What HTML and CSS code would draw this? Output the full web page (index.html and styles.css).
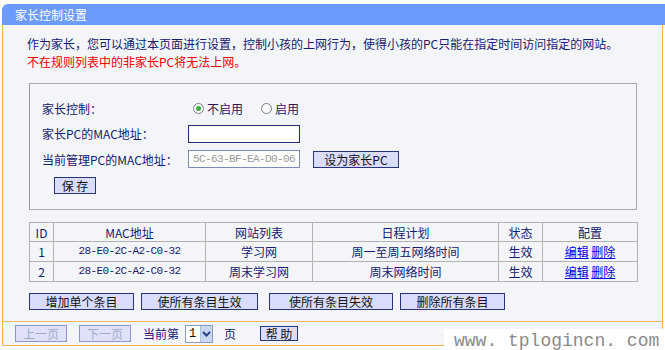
FILE: index.html
```html
<!DOCTYPE html>
<html lang="zh-CN">
<head>
<meta charset="utf-8">
<title>家长控制设置</title>
<link rel="stylesheet" href="styles.css">
</head>
<body>
<div class="wrap">
  <div class="title">家长控制设置</div>
  <div class="panel">
    <p class="intro">作为家长，您可以通过本页面进行设置，控制小孩的上网行为，使得小孩的PC只能在指定时间访问指定的网站。</p>
    <p class="warn">不在规则列表中的非家长PC将无法上网。</p>
    <div class="box">
      <div class="row">
        <span class="label">家长控制：</span>
        <span class="radio on"></span><span class="rtext">不启用</span>
        <span class="radio second"></span><span class="rtext">启用</span>
      </div>
      <div class="row">
        <span class="label">家长PC的MAC地址：</span>
        <span class="field"></span>
      </div>
      <div class="row row3">
        <span class="label">当前管理PC的MAC地址：</span>
        <span class="field disabled">5C-63-BF-EA-D0-06</span>
        <span class="btn setpc">设为家长PC</span>
      </div>
      <div class="saverow"><span class="btn save">保 存</span></div>
    </div>
    <table class="rules">
      <colgroup>
        <col class="c-id"><col class="c-mac"><col class="c-site"><col class="c-plan"><col class="c-state"><col class="c-cfg">
      </colgroup>
      <tr><th>ID</th><th>MAC地址</th><th>网站列表</th><th>日程计划</th><th>状态</th><th>配置</th></tr>
      <tr><td>1</td><td class="mac">28-E0-2C-A2-C0-32</td><td>学习网</td><td>周一至周五网络时间</td><td>生效</td><td><a href="#">编辑</a> <a href="#">删除</a></td></tr>
      <tr><td>2</td><td class="mac">28-E0-2C-A2-C0-32</td><td>周末学习网</td><td>周末网络时间</td><td>生效</td><td><a href="#">编辑</a> <a href="#">删除</a></td></tr>
    </table>
    <div class="actions">
      <span class="btn a1">增加单个条目</span>
      <span class="btn a2">使所有条目生效</span>
      <span class="btn a3">使所有条目失效</span>
      <span class="btn a4">删除所有条目</span>
    </div>
  </div>
  <div class="footer">
    <span class="btn off prev">上一页</span>
    <span class="btn off next">下一页</span>
    <span class="ftext">当前第</span>
    <span class="select"><span class="sval">1</span><span class="sarrow"><svg width="9" height="6" viewBox="0 0 9 6"><path d="M1 1 L4.5 4.5 L8 1" fill="none" stroke="#2a3f8a" stroke-width="2"/></svg></span></span>
    <span class="ftext page">页</span>
    <span class="btn help">帮 助</span>
  </div>
  <div class="watermark">www. tplogincn. com</div>
</div>
</body>
</html>
```
FILE: styles.css
```css
html, body {
  margin: 0;
  padding: 0;
  background: #ffffff;
}
body {
  font-family: "Noto Sans CJK SC", "Noto Sans", sans-serif;
  font-size: 12px;
  color: #14206e;
}
.wrap {
  position: relative;
  width: 663px;
  height: 350px;
  margin-left: 2px;
}
.title {
  margin-top: 4px;
  height: 21px;
  line-height: 21px;
  background: #6b9bfd;
  border-top-left-radius: 6px;
  color: #ffffff;
  padding-left: 13px;
  font-size: 12px;
}
.panel {
  background: #f4f5f8;
  border-left: 1px solid #efb35c;
  border-right: 1px solid #efb35c;
  border-bottom: 1px solid #efb35c;
  padding: 10px 0 11px 26px;
  box-sizing: border-box;
  width: 661px;
}
.intro, .warn {
  margin: 0 0 0 -2px;
  line-height: 18px;
  white-space: nowrap;
}
.warn {
  color: #ee0000;
}
.box {
  margin-top: 12px;
  width: 608px;
  height: 127px;
  box-sizing: border-box;
  border: 1px solid #a9a9a9;
  border-left-color: #9a9a9a;
  padding: 12px 0 0 12px;
}
.row {
  display: flex;
  align-items: center;
  height: 25px;
}
.row3 {
  height: 26px;
}
.label {
  width: 146px;
  flex: none;
}
.radio {
  width: 11px;
  height: 11px;
  box-sizing: border-box;
  border: 1px solid #7a8290;
  border-radius: 50%;
  background: #f8f8f8;
  margin-left: 5px;
  margin-right: 3px;
  position: relative;
}
.radio.second {
  margin-left: 18px;
}
.radio.on::after {
  content: "";
  position: absolute;
  left: 2px;
  top: 2px;
  width: 5px;
  height: 5px;
  border-radius: 50%;
  background: #3cae3c;
}
.field {
  width: 112px;
  height: 18px;
  box-sizing: border-box;
  border: 1px solid #1f2e75;
  background: #ffffff;
  font-family: "Liberation Mono", monospace;
  font-size: 11px;
  letter-spacing: -0.6px;
  line-height: 16px;
  padding-left: 4px;
  color: #9a9a9a;
}
.field.disabled {
  border-color: #7d8ab8;
}
.btn {
  display: inline-flex;
  align-items: center;
  justify-content: center;
  height: 17px;
  box-sizing: border-box;
  background: #dadcfb;
  border: 1px solid #27357a;
  color: #111111;
  white-space: nowrap;
  font-size: 12px;
}
.setpc {
  width: 86px;
  margin-left: 13px;
}
.saverow {
  margin-top: 5px;
  padding-left: 12px;
  display: flex;
}
.save {
  width: 42px;
}
.rules {
  margin-top: 12px;
  width: 608px;
  table-layout: fixed;
  border-collapse: collapse;
  border: 1px solid #a6a6a6;
}
.rules th, .rules td {
  border: 1px solid #b2b2b2;
  text-align: center;
  font-weight: normal;
  padding: 0;
  height: 19px;
  line-height: 17px;
  color: #14206e;
  font-size: 12px;
}
.rules th {
  height: 18px;
}
.rules td.mac {
  font-family: "Liberation Mono", monospace;
  font-size: 11px;
  letter-spacing: -0.6px;
}
.c-id { width: 24px; }
.c-mac { width: 152px; }
.c-site { width: 107px; }
.c-plan { width: 186px; }
.c-state { width: 44px; }
.c-cfg { width: 95px; }
.rules a {
  color: #0000ee;
  text-decoration: underline;
}
.actions {
  display: flex;
  margin-top: 11px;
}
.a1 { width: 105px; }
.a2 { width: 117px; margin-left: 7px; }
.a3 { width: 124px; margin-left: 11px; }
.a4 { width: 105px; margin-left: 7px; }
.footer {
  display: flex;
  align-items: center;
  height: 24px;
  width: 661px;
  box-sizing: border-box;
  background: #f4f5f8;
  border-left: 1px solid #efb35c;
  border-right: 1px solid #efb35c;
  border-bottom: 1px solid #efb35c;
  padding-left: 12px;
}
.btn.off {
  width: 52px;
  background: #dfe2f8;
  border-color: #8c98cc;
  color: #a3a9cf;
}
.next {
  margin-left: 12px;
}
.ftext {
  margin-left: 12px;
  font-size: 12px;
}
.select {
  display: flex;
  width: 28px;
  height: 18px;
  box-sizing: border-box;
  border: 1px solid #8e9bb8;
  background: #ffffff;
  margin-left: 6px;
}
.sval {
  width: 13px;
  font-family: "Liberation Mono", monospace;
  font-size: 12px;
  line-height: 16px;
  padding-left: 3px;
  color: #111;
}
.sarrow {
  width: 13px;
  display: flex;
  align-items: center;
  justify-content: center;
  background: #c8d6f2;
  border-left: 1px solid #b0c0e0;
}
.page {
  margin-left: 11px;
}
.help {
  width: 38px;
  height: 15px;
  margin-left: 24px;
}
.watermark {
  position: absolute;
  left: 442px;
  top: 325px;
  width: 221px;
  height: 25px;
  background: #ffffff;
  color: #8a8a8a;
  font-family: "Liberation Mono", monospace;
  font-size: 18px;
  line-height: 25px;
  padding-left: 10px;
  box-sizing: border-box;
  white-space: nowrap;
}
```
